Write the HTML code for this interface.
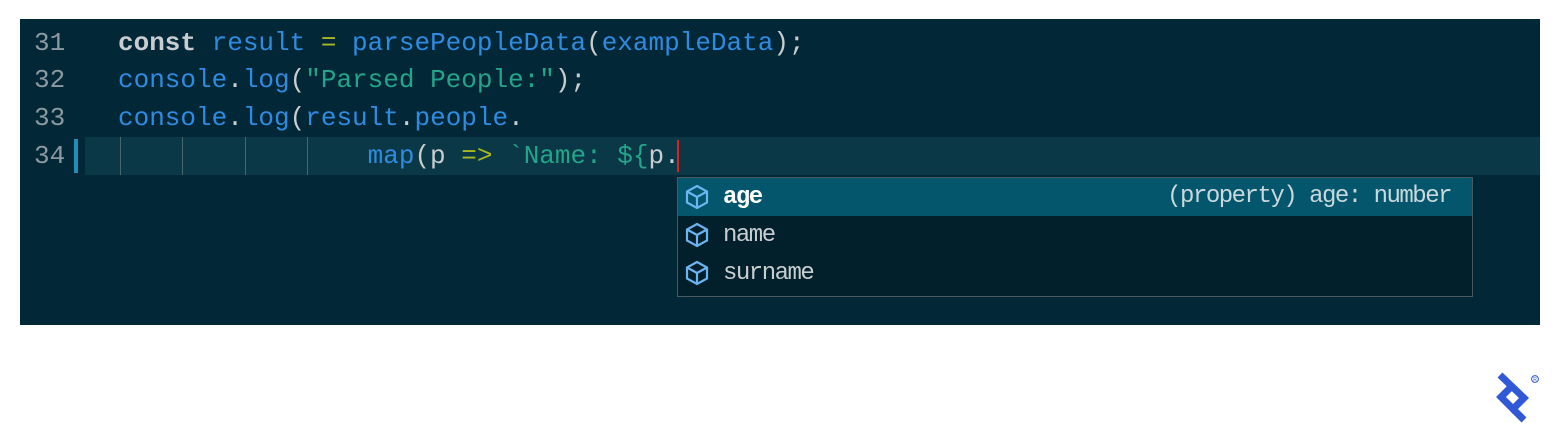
<!DOCTYPE html>
<html><head><style>
body{margin:0;width:1560px;height:443px;background:#fff;position:relative;overflow:hidden}
.ed{position:absolute;left:20px;top:19px;width:1520px;height:306px;background:#022838}
.ln{position:absolute;left:0;width:1520px;height:38px;font:26px/38px "Liberation Mono",monospace;white-space:pre;color:#2f8be0}
.n{position:absolute;left:14px;color:#8a9aa0}
.c{position:absolute;left:98px}
.k{color:#c8cdd0;font-weight:bold}
.s{color:#22a58a}
.w{color:#c8cdd0}
.y{color:#a8b820}
.hl{position:absolute;left:65px;top:118px;width:1455px;height:38px;background:#0a3846}
.bar{position:absolute;left:54px;top:120px;width:4px;height:34px;background:#1e8fb5}
.g{position:absolute;top:118px;width:1px;height:38px;background:#4b6470}
.pop{position:absolute;left:677px;top:177px;width:794px;height:118px;background:#01202b;border:1px solid #4a5a60}
.row{position:absolute;left:0;width:794px;height:38px;font:24px/38px "Liberation Mono",monospace;color:#c8cdd0}
.row svg{position:absolute;left:6px;top:6px}
.row .t{position:absolute;left:45px;top:1px;font:24px/38px "Liberation Mono",monospace;letter-spacing:-1.5px}
</style></head><body>
<div class="ed">
<div class="hl"></div><div class="bar"></div>
<div class="g" style="left:100px"></div><div class="g" style="left:162px"></div><div class="g" style="left:225px"></div><div class="g" style="left:287px"></div>
<div class="ln" style="top:5px"><span class="n">31</span><span class="c"><span class="k">const</span> result <span class="y">=</span> parsePeopleData<span class="w">(</span>exampleData<span class="w">);</span></span></div>
<div class="ln" style="top:42px"><span class="n">32</span><span class="c">console<span class="w">.</span>log<span class="w">(</span><span class="s">"Parsed People:"</span><span class="w">);</span></span></div>
<div class="ln" style="top:80px"><span class="n">33</span><span class="c">console<span class="w">.</span>log<span class="w">(</span>result<span class="w">.</span>people<span class="w">.</span></span></div>
<div class="ln" style="top:118px"><span class="n">34</span><span class="c">                map<span class="w">(p </span><span class="y">=&gt;</span> <span class="s">`Name: ${</span><span class="w">p.</span></span></div>
<div style="position:absolute;left:657px;top:121px;width:2px;height:32px;background:#e02020"></div>
</div>
<div class="pop">
<div class="row" style="top:0;background:#03566c;color:#fff"><svg width="26" height="26" viewBox="0 0 26 26" fill="none" stroke="#6cb4f0" stroke-width="2.2"><path d="M13 2 L23 7.5 V18.5 L13 24 L3 18.5 V7.5 Z M3 7.5 L13 13 L23 7.5 M13 13 V24"/></svg><span class="t" style="font-weight:bold">age</span><span style="position:absolute;right:21px;color:#c8d8dc;letter-spacing:-1.5px">(property) age: number</span></div>
<div class="row" style="top:38px"><svg width="26" height="26" viewBox="0 0 26 26" fill="none" stroke="#6cb4f0" stroke-width="2.2"><path d="M13 2 L23 7.5 V18.5 L13 24 L3 18.5 V7.5 Z M3 7.5 L13 13 L23 7.5 M13 13 V24"/></svg><span class="t">name</span></div>
<div class="row" style="top:76px"><svg width="26" height="26" viewBox="0 0 26 26" fill="none" stroke="#6cb4f0" stroke-width="2.2"><path d="M13 2 L23 7.5 V18.5 L13 24 L3 18.5 V7.5 Z M3 7.5 L13 13 L23 7.5 M13 13 V24"/></svg><span class="t">surname</span></div>
</div>
<svg style="position:absolute;left:1490px;top:368px" width="60" height="60" viewBox="0 0 60 60"><g fill="none" stroke="#3158d6" stroke-width="7" stroke-linejoin="miter"><path d="M10 7 L34 30 L23 41 L11 29 L21 19"/><path d="M23 41 L34 52"/></g><circle cx="45" cy="11" r="3.4" fill="none" stroke="#3158d6" stroke-width="1"/><text x="43.2" y="13.1" font-size="5" fill="#3158d6" font-family="Liberation Sans,sans-serif">R</text></svg>
</body></html>
